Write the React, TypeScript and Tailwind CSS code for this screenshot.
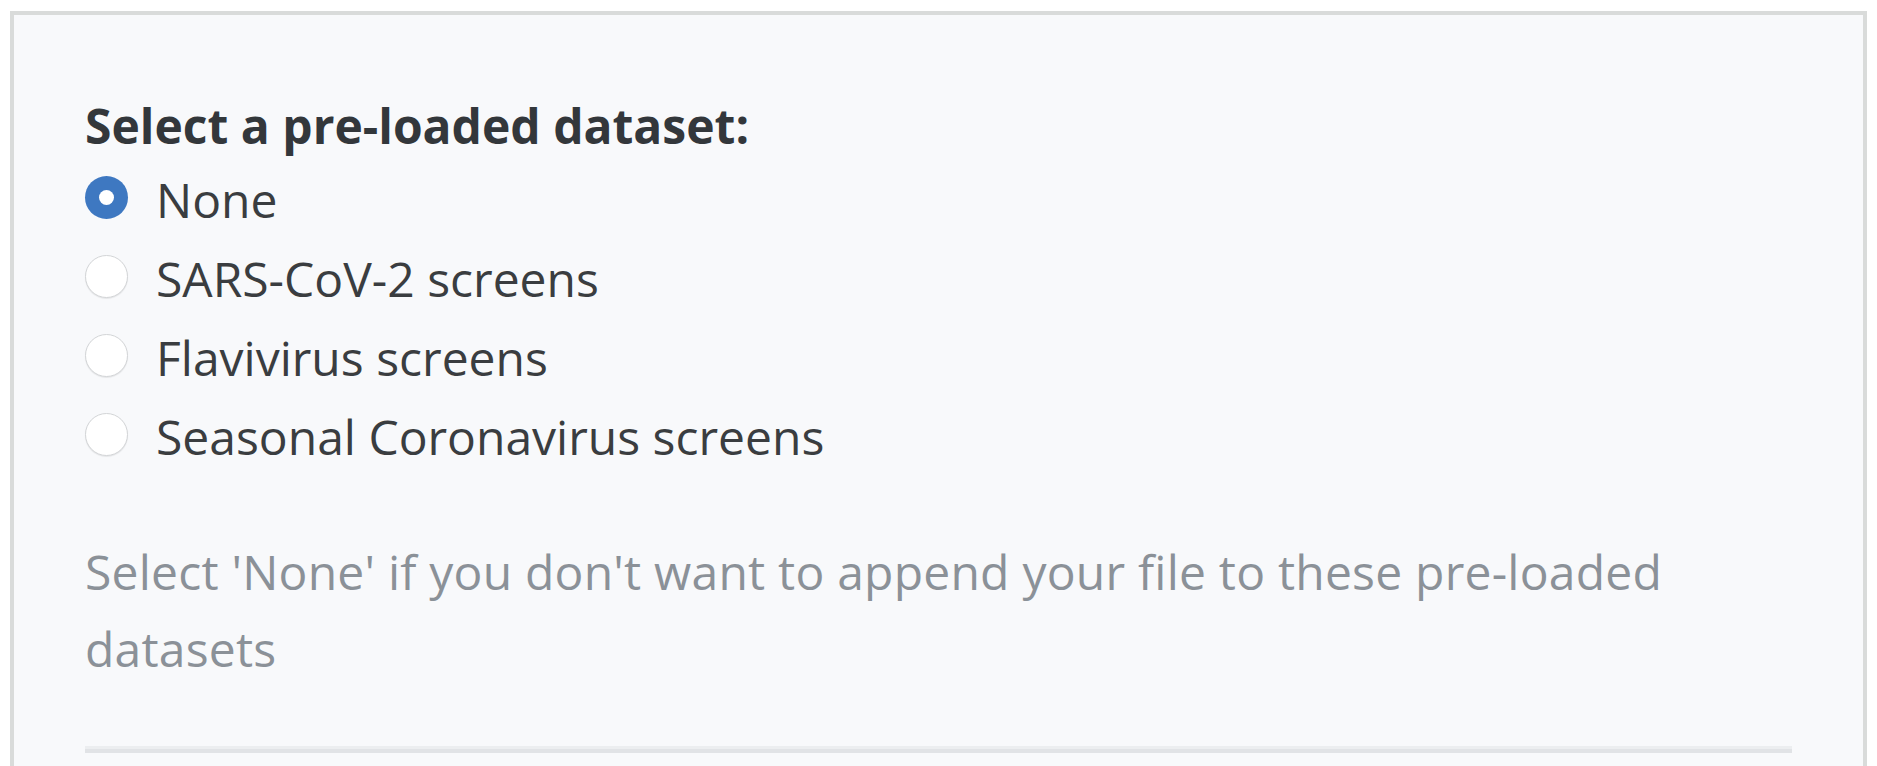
import { useState } from 'react';

const DATASETS = [
  { value: 'none', label: 'None' },
  { value: 'sars', label: 'SARS-CoV-2 screens' },
  { value: 'flavi', label: 'Flavivirus screens' },
  { value: 'seasonal', label: 'Seasonal Coronavirus screens' },
];

function Radio({ checked }: { checked: boolean }) {
  return checked ? (
    <span className="mt-[16px] flex h-[43px] w-[43px] shrink-0 items-center justify-center rounded-full bg-[#3e78c1]">
      <span className="h-[15px] w-[15px] rounded-full bg-white" />
    </span>
  ) : (
    <span className="mt-[16px] h-[43px] w-[43px] shrink-0 rounded-full border-[1.5px] border-[#d3d5d7] bg-white shadow-[0_1px_1px_rgba(0,0,0,0.08)]" />
  );
}

export default function App() {
  const [value, setValue] = useState('none');

  return (
    <div className="min-h-screen bg-white px-[10px] pt-[11px]" style={{ fontFamily: '"Open Sans", sans-serif' }}>
      <div className="border-4 border-[#d9dbda] bg-[#f8f9fb] px-[71px] pb-[60px] pt-[79px]">
        <label className="block text-[48px] font-bold leading-[64px] text-[#33373b]">Select a pre-loaded dataset:</label>
        <div className="mt-[2px]">
          {DATASETS.map((d) => (
            <div
              key={d.value}
              onClick={() => setValue(d.value)}
              className="flex h-[79px] cursor-pointer items-start gap-[28px]"
            >
              <Radio checked={value === d.value} />
              <span className="text-[48px] leading-[79px] text-[#3a3d40]">{d.label}</span>
            </div>
          ))}
        </div>
        <p className="mt-[57px] text-[48px] leading-[77px] tracking-[0.22px] text-[#8b9198]">
          Select 'None' if you don't want to append your file to these pre-loaded datasets
        </p>
        <div className="mt-[59px] h-[7px] border-t-[3px] border-[#eceef0] bg-[#e1e3e6]" />
      </div>
    </div>
  );
}
